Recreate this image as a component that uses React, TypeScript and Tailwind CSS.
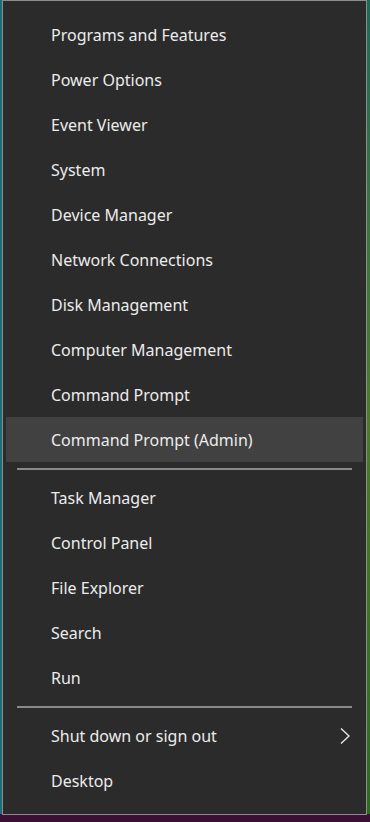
import React from "react";

const group1 = [
  "Programs and Features",
  "Power Options",
  "Event Viewer",
  "System",
  "Device Manager",
  "Network Connections",
  "Disk Management",
  "Computer Management",
  "Command Prompt",
  "Command Prompt (Admin)",
];
const group2 = ["Task Manager", "Control Panel", "File Explorer", "Search", "Run"];

function Row({ label, active, chevron }: { label: string; active?: boolean; chevron?: boolean }) {
  return (
    <div
      className={`mx-[3px] h-[45px] flex items-center pl-[45px] pr-[12px] text-[16px] text-[#ececec] ${
        active ? "bg-[#414141]" : ""
      }`}
    >
      <span className="flex-1 leading-none">{label}</span>
      {chevron && (
        <svg width="12" height="18" viewBox="0 0 12 18" fill="none">
          <path d="M2 1.5 L10 9 L2 16.5" stroke="#e6e6e6" strokeWidth="1.4" />
        </svg>
      )}
    </div>
  );
}

function Sep() {
  return (
    <div className="h-[13px] flex items-center px-[14px]">
      <div className="h-[2px] w-full bg-[#8a8a8a]" />
    </div>
  );
}

export default function App() {
  return (
    <div
      className="w-[370px] h-[822px] relative overflow-hidden bg-[#1c6e7a]"
      style={{ fontFamily: '"Segoe UI", "Noto Sans", "Open Sans", sans-serif' }}
    >
      <div className="absolute right-0 top-0 w-[4px] h-full bg-gradient-to-b from-[#1d6a58] via-[#4f7a2a] to-[#2a6a20]" />
      <div className="absolute left-0 bottom-0 w-full h-[8px] bg-[#3a1034]" />
      <div className="relative ml-[2px] w-[365px] h-[815px] border border-[#8d8d8d] bg-[#2b2b2b] pt-[11px]">
        {group1.map((l, i) => (
          <Row key={l} label={l} active={i === 9} />
        ))}
        <Sep />
        {group2.map((l) => (
          <Row key={l} label={l} />
        ))}
        <Sep />
        <Row label="Shut down or sign out" chevron />
        <Row label="Desktop" />
      </div>
    </div>
  );
}
